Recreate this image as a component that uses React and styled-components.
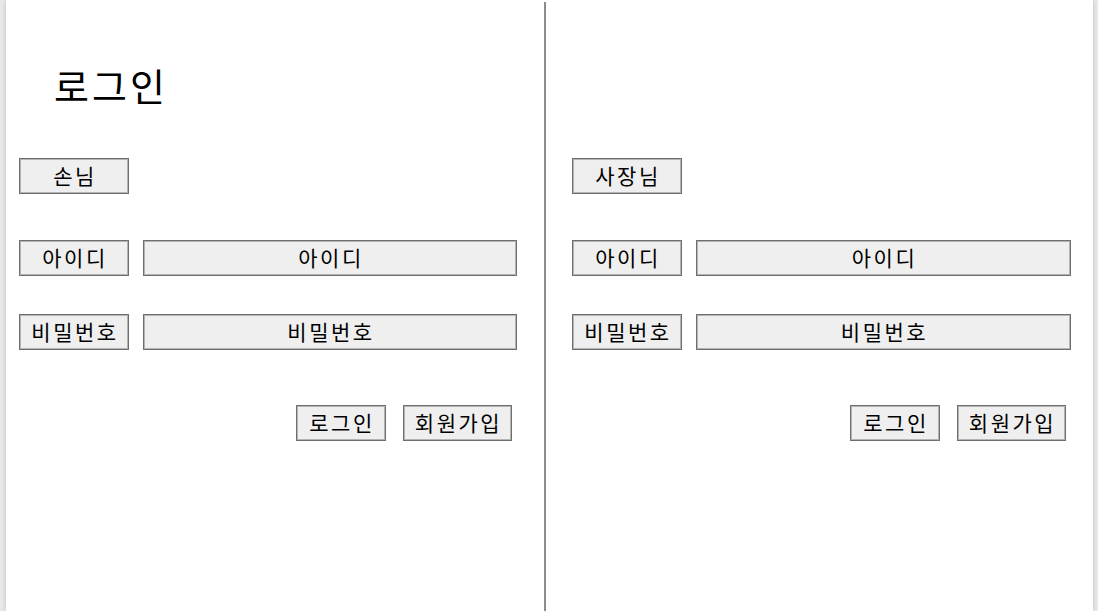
import styled, { createGlobalStyle } from 'styled-components'

const GlobalStyle = createGlobalStyle`
  html, body {
    margin: 0;
    padding: 0;
    background: #e9e9e9;
    font-family: "Noto Sans CJK KR", "Noto Sans", sans-serif;
  }
`

const App = () => {
  return (
    <>
      <GlobalStyle />
      <Page>
        <Panel side="left">
          <Header>
            <Title>로그인</Title>
          </Header>
          <LoginForm role="손님" />
        </Panel>
        <Divider />
        <Panel side="right">
          <Header />
          <LoginForm role="사장님" />
        </Panel>
      </Page>
    </>
  )
}

const LoginForm = ({ role }) => (
  <Form>
    <Row>
      <Box width="110px">{role}</Box>
    </Row>
    <Row gapTop="46px">
      <Box width="110px">아이디</Box>
      <Field>아이디</Field>
    </Row>
    <Row gapTop="38px">
      <Box width="110px">비밀번호</Box>
      <Field>비밀번호</Field>
    </Row>
    <Actions>
      <Box width="90px">로그인</Box>
      <Box width="109px">회원가입</Box>
    </Actions>
  </Form>
)

const Page = styled.div`
  display: flex;
  height: 100vh;
  margin: 0 5px 0 6px;
  background: #fff;
  box-shadow: 0 0 5px rgba(0, 0, 0, 0.18);
`

const Panel = styled.section`
  box-sizing: border-box;
  display: flex;
  flex-direction: column;
  ${p => p.side === 'left'
    ? 'width: 538px; padding: 0 27px 0 13px;'
    : 'flex: 1; padding: 0 22px 0 26px;'}
`

const Divider = styled.div`
  width: 2px;
  margin-top: 2px;
  background: #8c8c8c;
`

const Header = styled.div`
  height: 158px;
`

const Title = styled.h1`
  margin: 66px 0 0 35px;
  font-size: 38px;
  line-height: 38px;
  font-weight: 400;
  letter-spacing: 3px;
  color: #000;
`

const Form = styled.div`
  display: flex;
  flex-direction: column;
`

const Row = styled.div`
  display: flex;
  gap: 14px;
  margin-top: ${p => p.gapTop || '0'};
`

const Box = styled.div`
  box-sizing: border-box;
  display: flex;
  align-items: center;
  justify-content: center;
  flex: none;
  width: ${p => p.width};
  height: 36px;
  padding: 0 0 3px 2px;
  background: #efefef;
  border: 1px solid #6f6f6f;
  box-shadow: inset 0 0 0 1px #b4b4b4;
  font-size: 21px;
  letter-spacing: 2.5px;
  color: #000;
  white-space: nowrap;
`

const Field = styled(Box)`
  flex: 1;
`

const Actions = styled.div`
  display: flex;
  justify-content: flex-end;
  gap: 17px;
  margin-top: 55px;
  padding-right: 5px;
`

export default App
